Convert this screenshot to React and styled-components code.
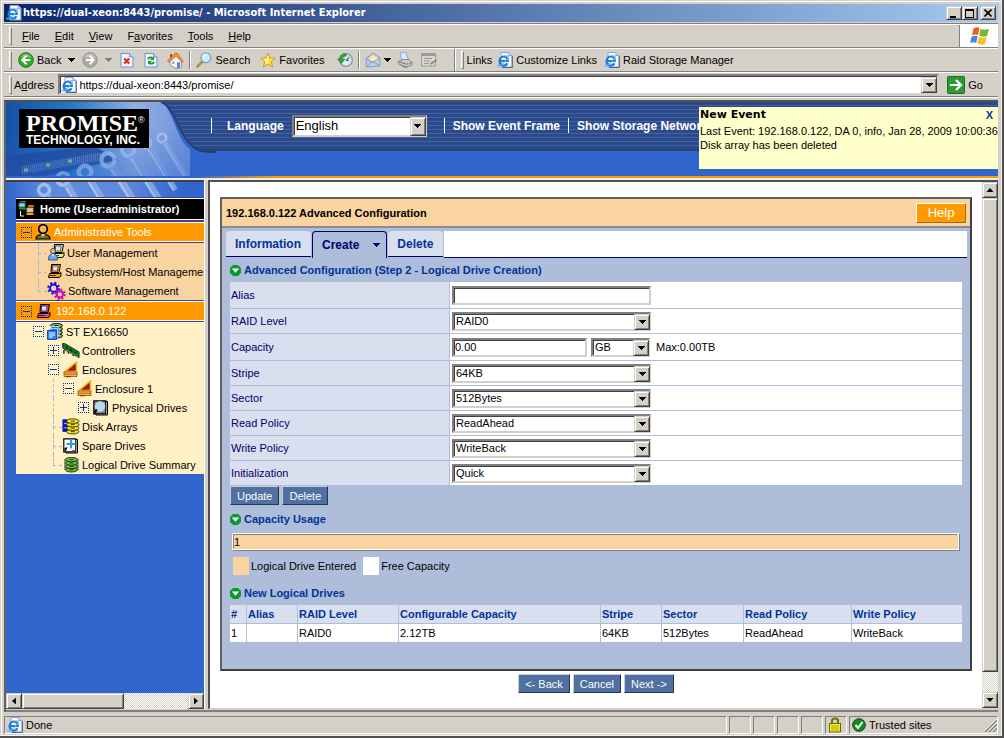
import React from "react";
import styled, { createGlobalStyle, css } from "styled-components";

const GlobalStyle = createGlobalStyle`
  * {
    box-sizing: border-box;
  }

  body {
    margin: 0;
    background: #d4d0c8;
    font-family: "Liberation Sans", Arial, sans-serif;
    font-size: 11px;
    line-height: 14px;
    color: #000;
  }

  button, input, select {
    font-family: inherit;
    font-size: inherit;
    margin: 0;
    border-radius: 0;
  }

  a {
    color: inherit;
    text-decoration: none;
  }
`;

const raised = css`
  border: 1px solid;
  border-color: #d4d0c8 #404040 #404040 #d4d0c8;
  box-shadow: inset 1px 1px 0 #fff, inset -1px -1px 0 #808080;
  background: #d4d0c8;
`;

const sunken = css`
  border: 2px solid;
  border-color: #808080 #d4d0c8 #d4d0c8 #808080;
  box-shadow: inset 1px 1px 0 #404040;
  background: #fff;
`;

/* ---------- browser window ---------- */

const Window = styled.div`
  display: flex;
  flex-direction: column;
  min-height: 100vh;
  padding: 4px 6px 4px 4px;
  background: #d4d0c8;
  box-shadow: inset -2px -2px 0 #505050, inset -3px -3px 0 #f4f2ee, inset 1px 1px 0 #d4d0c8, inset 2px 2px 0 #fff;
`;

const TitleBar = styled.header`
  display: flex;
  align-items: center;
  height: 18px;
  padding: 0 2px;
  background: linear-gradient(to right, #0a246a, #a6caf0);
  color: #fff;

  h1 {
    flex: 1;
    margin: 0 0 0 1px;
    font-size: 11px;
    font-family: "DejaVu Sans Condensed", "DejaVu Sans", sans-serif;
    font-weight: bold;
    white-space: nowrap;
  }
`;

const WindowButton = styled.button`
  ${raised}
  display: flex;
  align-items: center;
  justify-content: center;
  width: 16px;
  height: 14px;
  padding: 0;
  margin-left: ${(props) => (props.$gap ? "2px" : 0)};
`;

const Bars = styled.div`
  margin-top: 1px;
  border-top: 1px solid #808080;
  border-bottom: 1px solid #fff;
`;

const Bar = styled.div`
  display: flex;
  align-items: center;
  height: ${(props) => (props.$tall ? "25px" : "24px")};
  padding-left: 5px;
  border-top: 1px solid #fff;
  border-bottom: 1px solid #808080;
  overflow: hidden;
  white-space: nowrap;
`;

const Grip = styled.span`
  flex: none;
  width: 3px;
  height: 18px;
  border: 1px solid;
  border-color: #fff #808080 #808080 #fff;
`;

const Divider = styled.span`
  flex: none;
  width: 2px;
  height: ${(props) => (props.$full ? "24px" : "18px")};
  margin: 0 5px;
  background: linear-gradient(to right, #808080 50%, #fff 50%);
`;

const Menu = styled.nav`
  display: flex;
  flex: 1;
  gap: 15px;
  padding-left: 10px;
`;

const MenuItem = styled.a`
  color: #000;
`;

const FlagCell = styled.div`
  display: flex;
  align-items: center;
  justify-content: center;
  align-self: stretch;
  width: 39px;
  border-left: 1px solid #808080;
  background: #fff;
`;

const ToolButton = styled.button`
  display: flex;
  align-items: center;
  flex: none;
  gap: 3px;
  height: 20px;
  padding: 0;
  margin-left: ${(props) => props.$before || 0}px;
  border: 0;
  background: none;
  color: #000;
`;

const ToolLink = styled.a`
  display: flex;
  align-items: center;
  gap: 3px;
  margin-left: ${(props) => props.$before || 0}px;
`;

const AddressBox = styled.div`
  ${sunken}
  display: flex;
  align-items: center;
  flex: 1;
  height: 21px;
  margin-left: 4px;
  padding-left: 1px;
`;

const AddressInput = styled.input`
  flex: 1;
  min-width: 0;
  margin-left: 2px;
  padding: 0;
  border: 0;
  outline: 0;
`;

const ArrowButton = styled.button`
  ${raised}
  display: flex;
  align-items: center;
  justify-content: center;
  flex: none;
  width: 16px;
  height: 16px;
  padding: 0;
`;

const GoButton = styled(ToolButton)`
  margin: 0 15px 0 8px;
`;

/* ---------- page header ---------- */

const Page = styled.main`
  position: relative;
  display: flex;
  flex: 1;
  flex-direction: column;
  margin-top: 2px;
  border-left: 2px solid #606060;
  border-top: 2px solid #505050;
`;

const Banner = styled.div`
  position: relative;
  height: 76px;
  overflow: hidden;
  background: #3165ce;
  border-bottom: 2px solid #ff9a00;
  border-image: linear-gradient(to right, #3165ce 190px, #ff9a00 270px) 2;
`;

const Stripes = styled.div`
  display: flex;
  align-items: center;
  height: 49px;
  padding-left: 205px;
  border-bottom: 2px solid #2c4373;
  background: repeating-linear-gradient(#2a4a8c 0, #2a4a8c 3px, #44639f 3px, #44639f 4px);
  color: #fff;
  font-size: 12px;
  font-weight: bold;
  white-space: nowrap;
`;

const BannerPicture = styled.svg`
  position: absolute;
  left: 0;
  top: 0;
`;

const Logo = styled.div`
  position: absolute;
  left: 13px;
  top: 7px;
  width: 130px;
  height: 39px;
  padding: 2px 0 0 7px;
  background: #000;
  color: #fff;
  white-space: nowrap;

  strong {
    display: block;
    font: bold 24px/24px "Liberation Serif", serif;
  }

  sup {
    font: 9px/9px "Liberation Sans", sans-serif;
    vertical-align: 8px;
  }

  span {
    display: block;
    font: 900 12px/10px "Liberation Sans", sans-serif;
  }
`;

const HeaderItem = styled.div`
  display: flex;
  align-items: center;
  height: 15px;
  padding-left: ${(props) => (props.$wide ? "15px" : "8px")};
  margin-right: ${(props) => (props.$wide ? "17px" : "8px")};
  border-left: 1px solid #fff;

  label {
    margin-right: 8px;
  }
`;

const EventPopup = styled.aside`
  position: absolute;
  right: 0;
  top: 5px;
  width: 299px;
  height: 62px;
  padding: 1px 0 0 1px;
  background: #ffffcc;
  white-space: nowrap;
`;

const EventTitle = styled.div`
  display: flex;
  justify-content: space-between;
  margin-bottom: 2px;
  padding-right: 5px;
  font: bold 11px/14px "DejaVu Sans", sans-serif;

  button {
    padding: 0;
    border: 0;
    background: none;
    color: #003399;
    font: bold 11px/14px "Liberation Sans", sans-serif;
  }
`;

/* ---------- frames ---------- */

const Frames = styled.div`
  display: grid;
  flex: 1;
  grid-template-columns: 198px 4px minmax(0, 1fr);
  padding-bottom: 1px;
  border-top: 2px solid #f0eee8;
  border-bottom: 2px solid #808080;
`;

const Splitter = styled.div`
  border-left: 1px solid #fff;
  background: #d4d0c8;
`;

const Side = styled.div`
  position: relative;
  display: flex;
  flex-direction: column;
  overflow: hidden;
  border-top: 2px solid #404040;
  background: #3165ce;
`;

const SidePicture = styled.svg`
  position: absolute;
  left: 0;
  top: 0;
`;

const Tree = styled.div`
  position: relative;
  flex: 1;
  margin: 15px 0 0 10px;
`;

const TreeGroup = styled.div`
  background: ${(props) => props.$color};
`;

const TreeBar = styled.div`
  display: flex;
  align-items: center;
  height: ${(props) => (props.$home ? "24px" : "22px")};
  padding-left: ${(props) => (props.$home ? "2px" : "5px")};
  border-top: 1px solid #4a3c8c;
  border-bottom: 1px solid #4a3c8c;
  box-shadow: inset 0 1px 0 #fff, inset 0 -1px 0 #fff;
  background: ${(props) => (props.$home ? "#000" : "#ff9900")};
  color: #fff;
  font-weight: ${(props) => (props.$home ? "bold" : "normal")};
  white-space: nowrap;

  a {
    margin-left: ${(props) => (props.$home ? "5px" : "3px")};
  }
`;

const TreeRow = styled.div`
  position: relative;
  display: flex;
  align-items: center;
  height: 19px;
  padding-left: ${(props) => props.$indent}px;
  white-space: nowrap;

  &::before {
    content: "";
    display: ${(props) => (props.$line ? "block" : "none")};
    position: absolute;
    left: ${(props) => props.$line}px;
    top: 0;
    width: ${(props) => (props.$branch ? "8px" : 0)};
    height: ${(props) => (props.$branch ? "10px" : "19px")};
    border-left: 1px dashed #a9b7cf;
    border-bottom: ${(props) => (props.$branch ? "1px dashed #a9b7cf" : 0)};
  }

  &::after {
    content: "";
    display: ${(props) => (props.$more ? "block" : "none")};
    position: absolute;
    left: ${(props) => props.$line}px;
    top: 10px;
    height: 9px;
    border-left: 1px dashed #a9b7cf;
  }

  a {
    margin-left: 2px;
  }
`;

const Toggle = styled.button`
  position: relative;
  z-index: 1;
  flex: none;
  width: 11px;
  height: 11px;
  padding: 0;
  margin-right: 3px;
  border: 1px dotted #003399;
  background: transparent;

  &::before {
    content: "";
    position: absolute;
    left: 1px;
    top: 4px;
    width: 7px;
    height: 1px;
    background: #003399;
  }

  &::after {
    content: "";
    display: ${(props) => (props.$open ? "none" : "block")};
    position: absolute;
    left: 4px;
    top: 1px;
    width: 1px;
    height: 7px;
    background: #003399;
  }
`;

const IconSlot = styled.span`
  position: relative;
  display: flex;
  align-items: center;
  justify-content: center;
  flex: none;
  width: ${(props) => props.$width || 18}px;
`;

const ScrollTrack = styled.div`
  display: flex;
  flex-direction: ${(props) => (props.$vertical ? "column" : "row")};
  flex: none;
  ${(props) => (props.$vertical ? "width: 16px;" : "height: 16px;")}
  background: repeating-conic-gradient(#fff 0 25%, #d4d0c8 0 50%) 0 0 / 2px 2px;
`;

const ScrollRest = styled.div`
  flex: 1;
`;

const ScrollThumb = styled.div`
  ${raised}
  flex: ${(props) => props.$share};
`;

const Main = styled.div`
  display: flex;
  min-width: 0;
  border: 2px solid;
  border-width: 2px 0 1px 2px;
  border-color: #505050 #d4d0c8 #d4d0c8 #505050;
  background: #fff;
`;

const MainBody = styled.div`
  flex: 1;
  min-width: 0;
  padding: 15px 10px 8px;
`;

/* ---------- configuration panel ---------- */

const Panel = styled.section`
  border: 2px solid;
  border-color: #606060 #404040 #404040 #606060;
  background: #adbdda;
`;

const PanelTitle = styled.div`
  display: flex;
  align-items: center;
  justify-content: space-between;
  height: 29px;
  padding: 0 4px;
  border-bottom: 2px solid #8b8b93;
  background: #fad4a0;

  h2 {
    margin: 0;
    font-size: 11px;
  }
`;

const HelpButton = styled.button`
  width: 50px;
  height: 20px;
  padding: 0;
  border: 1px solid;
  border-color: #fff #a06a20 #a06a20 #fff;
  background: #ff9900;
  color: #fff;
  font-size: 13px;
`;

const Tabs = styled.div`
  display: flex;
  gap: 1px;
  height: 30px;
  padding: 3px 3px 0 4px;
`;

const Tab = styled.button`
  display: flex;
  align-items: center;
  gap: 14px;
  height: ${(props) => (props.$active ? "27px" : "26px")};
  padding: 0 ${(props) => (props.$active ? "6px" : "10px")} 0 9px;
  border: 0 solid #00006b;
  border-width: ${(props) => (props.$active ? "1px 1px 0 1px" : "0 0 1px 0")};
  border-radius: 4px 4px 0 0;
  background: ${(props) => (props.$active ? "#adbdda" : "#d9dfee")};
  color: ${(props) => (props.$active ? "#00006b" : "#003399")};
  font-size: 12px;
  font-weight: bold;
`;

const TabRest = styled.div`
  flex: 1;
  height: 27px;
  border-bottom: 1px solid #00006b;
  background: #fff;
`;

const PanelBody = styled.div`
  padding: 0 8px 27px;
`;

const Heading = styled.h3`
  display: flex;
  align-items: center;
  gap: 3px;
  height: 24px;
  margin: ${(props) => props.$above || 0}px 0 0;
  color: #003399;
  font-size: 11px;
`;

const FormGrid = styled.div`
  display: grid;
  gap: 1px;
`;

const FormRow = styled.div`
  display: grid;
  grid-template-columns: 219px minmax(0, 1fr);
  gap: 1px;
  height: ${(props) => (props.$tall ? "26px" : "24px")};

  > label {
    display: flex;
    align-items: center;
    padding-left: 1px;
    background: #d9dfee;
    color: #00006b;
  }
`;

const FormValue = styled.div`
  display: flex;
  align-items: center;
  padding-left: 2px;
  background: #fff;
`;

const TextField = styled.input`
  ${sunken}
  width: ${(props) => props.$width}px;
  height: 19px;
  padding: 0 1px;
`;

const SelectBox = styled.div`
  position: relative;
  width: ${(props) => props.$width}px;
  height: ${(props) => props.$height || 19}px;

  select {
    ${sunken}
    display: block;
    width: 100%;
    height: 100%;
    padding: 0 18px 0 2px;
    appearance: none;
    color: #000;
    font-size: ${(props) => props.$size || 11}px;
  }

  span {
    ${raised}
    position: absolute;
    right: 1px;
    top: 2px;
    bottom: 1px;
    display: flex;
    align-items: center;
    justify-content: center;
    width: 16px;
    pointer-events: none;
  }
`;

const Spacer = styled.span`
  width: ${(props) => props.$width}px;
`;

const Buttons = styled.div`
  display: flex;
  justify-content: ${(props) => (props.$center ? "center" : "flex-start")};
  gap: 3px;
  margin-top: ${(props) => (props.$center ? "3px" : "1px")};
  margin-bottom: 2px;
`;

const Button = styled.button`
  height: 19px;
  padding: 0 6px;
  border: 1px solid;
  border-color: #c5d0e2 #25364f #25364f #c5d0e2;
  background: #4f70a0;
  color: #fff;
`;

const CapacityBar = styled.div`
  margin: 2px 2px 0;
  height: 18px;
  border: 1px solid;
  border-color: #fff #808080 #808080 #fff;
  background: #fff;
  padding: 0 1px 1px 0;

  div {
    height: 100%;
    border: 1px solid;
    border-color: #808080 #fad4a0 #fad4a0 #808080;
    background: #fad4a0;
  }
`;

const Legend = styled.div`
  display: flex;
  align-items: center;
  margin: 6px 0 0 3px;

  span {
    margin: 0 7px 0 2px;
  }
`;

const Swatch = styled.i`
  width: 16px;
  height: 18px;
  background: ${(props) => props.$color};
`;

const DriveTable = styled.table`
  width: 100%;
  table-layout: fixed;
  border-collapse: separate;
  border-spacing: 0;

  th, td {
    height: 18px;
    padding: 0 1px;
    border-right: 1px solid #adbdda;
    line-height: 18px;
    text-align: left;
    white-space: nowrap;
    background: #fff;
  }

  th {
    height: 19px;
    border-bottom: 1px solid #adbdda;
    background: #d9dfee;
    color: #003399;
  }

  th:last-child, td:last-child {
    border-right: 0;
  }
`;

/* ---------- status bar ---------- */

const StatusBar = styled.footer`
  display: flex;
  gap: 2px;
  height: 18px;
  margin-top: 4px;
`;

const StatusCell = styled.div`
  display: flex;
  align-items: center;
  gap: 3px;
  width: ${(props) => props.$width}px;
  flex: ${(props) => (props.$grow ? "1" : "none")};
  padding-left: 2px;
  border: 1px solid;
  border-color: #808080 #fff #fff #808080;
`;

/* ---------- icons ---------- */

const Down = ({ color = "#000", size = 7 }) => (
  <svg width={size} height="4" viewBox="0 0 7 4" shapeRendering="crispEdges">
    <path d="M0 0h7v1H0zM1 1h5v1H1zM2 2h3v1H2zM3 3h1v1H3z" fill={color} />
  </svg>
);

const Triangle = ({ turn }) => (
  <svg width="8" height="8" viewBox="0 0 8 8">
    <path d="M0.5 6h7L4 2z" transform={`rotate(${turn} 4 4)`} />
  </svg>
);

const IePage = () => (
  <svg width="16" height="16" viewBox="0 0 16 16">
    <path d="M4 0.5h8l3 3v11.5H4z" fill="#f4f8ff" stroke="#8fa3d6" />
    <path d="M12 0.5v3h3" fill="#cfdcf6" stroke="#8fa3d6" />
    <path d="M15.3 4v11.500H5" fill="none" stroke="#4b5f9e" />
    <path d="M2.5 9h8.3c0-6-8.2-6-8.2 0.2 0 5.3 6 5.6 7.8 2" fill="none" stroke="#1f7cd6" strokeWidth="2.2" />
    <path d="M1 12.5C-0.5 16 5 13.5 9 8.5 12.5 4.5 12 2.5 8.5 4.5" fill="none" stroke="#62b7f0" strokeWidth="1.1" />
  </svg>
);

const Nav = ({ gray }) => (
  <svg width="16" height="16" viewBox="0 0 16 16">
    <circle cx="8" cy="8" r="7.3" fill={gray ? "#aaa9a4" : "#36a62c"} stroke={gray ? "#999" : "#1d7a1b"} />
    <path d="M2.5 6C4 0.8 12 0.8 13.5 6 10 4.5 6 4.5 2.5 6z" fill="#fff" opacity="0.35" />
    <path
      d="M8.5 3.8L4.3 8l4.2 4.2M4.8 8h7.4"
      transform={gray ? "rotate(180 8 8)" : undefined}
      fill="none"
      stroke="#fff"
      strokeWidth="2"
    />
  </svg>
);

const StopIcon = () => (
  <svg width="14" height="16" viewBox="0 0 14 16">
    <path d="M1 1.5h8.5L13 5v10H1z" fill="#eef3ff" stroke="#6e93d8" />
    <path d="M9.5 1.5V5H13" fill="#bcd0f5" stroke="#6e93d8" />
    <path d="M4.2 6.5l5 5M9.2 6.5l-5 5" stroke="#e02a14" strokeWidth="2.2" />
  </svg>
);

const RefreshIcon = () => (
  <svg width="14" height="16" viewBox="0 0 14 16">
    <path d="M1 1.5h8.5L13 5v10H1z" fill="#eef3ff" stroke="#6e93d8" />
    <path d="M9.5 1.5V5H13" fill="#bcd0f5" stroke="#6e93d8" />
    <path d="M4 7c1-2 3-2 4.3-0.8M10 10c-1 2-3.2 2.2-4.5 0.8" fill="none" stroke="#159a22" strokeWidth="1.8" />
    <path d="M10 4v4H6zM4 13V9h4z" fill="#159a22" />
  </svg>
);

const HomeIcon = () => (
  <svg width="17" height="17" viewBox="0 0 17 17">
    <path d="M3 8.5L9 3l5.5 6v6.5L9 16.5 3 13z" fill="#f5f5fa" stroke="#8795b8" />
    <path d="M0.5 9L7.5 1.5 10 1l6.5 8.5-1.5 1L9 4 2 10.5z" fill="#f0913a" stroke="#c06a1e" strokeWidth="0.7" />
    <path d="M3 2h2v2.5L3 6.5z" fill="#b44b32" />
    <path d="M10 10.5l3 -0.5v5.5l-3 0.7z" fill="#5f82cf" />
    <path d="M5 9.5h2.5v2.5H5z" fill="#87a9e8" />
  </svg>
);

const SearchIcon = () => (
  <svg width="16" height="16" viewBox="0 0 16 16">
    <path d="M6.5 9.5L1.5 14.5" stroke="#b98a4c" strokeWidth="2.6" strokeLinecap="round" />
    <circle cx="9.8" cy="5.8" r="4.9" fill="#c9ecff" stroke="#7d9fce" strokeWidth="1.3" />
    <path d="M7 5c0.5-2 2-2.5 3.5-2.4" fill="none" stroke="#fff" strokeWidth="1.5" />
  </svg>
);

const StarIcon = () => (
  <svg width="16" height="16" viewBox="0 0 16 16">
    <path d="M8 1l2 4.8 5.3 0.4-4 3.5 1.3 5.3L8 12.2 3.4 15l1.3-5.3-4-3.5L6 5.8z" fill="#ffe14d" stroke="#cf9a24" />
    <path d="M8 3.3v7.2l-2.5 1.4 0.6-2.6-2.3-2 3-0.4z" fill="#fff6b0" />
  </svg>
);

const HistoryIcon = () => (
  <svg width="16" height="16" viewBox="0 0 16 16">
    <circle cx="9" cy="8" r="6.3" fill="#dceaf4" stroke="#8198a8" strokeWidth="1.3" />
    <path d="M9 8.5l3.5-3.5M9 8.5h3" stroke="#566b86" strokeWidth="1.2" />
    <path d="M9.5 2.3C6 0.5 2.5 3.5 2.8 7H0.5L4.3 11.5 8 7H5.7c0-2 1-3 3.3-2.8z" fill="#37a637" stroke="#1e7c27" strokeWidth="0.6" />
  </svg>
);

const MailIcon = () => (
  <svg width="16" height="16" viewBox="0 0 16 16">
    <path d="M1 6.5L8 1l7 4.5v8.5L1.5 15z" fill="#b6d0f2" stroke="#7f9dcb" />
    <path d="M3.2 6.5L8 2.5l4.8 3V9L8 11z" fill="#ffe6b2" stroke="#ddb25d" strokeWidth="0.6" />
    <path d="M1.5 14.8L7 9.5l1.5 0.6 6.3 3.6M1 6.8l6.5 3.7L15 5.8" fill="none" stroke="#7f9dcb" />
  </svg>
);

const PrintIcon = () => (
  <svg width="16" height="16" viewBox="0 0 16 16">
    <path d="M3 1l6-0.5L11.5 8 5 9z" fill="#dcebff" stroke="#7b9bd0" strokeWidth="0.8" />
    <path d="M1.5 9.5L5 7.5h7l3 3v2.5L9.5 15 1.5 12z" fill="#c8c8c8" stroke="#8b8b8b" />
    <path d="M1.5 9.5l8 2.7 5.5-1.7M4 13l3 2.2 4-0.5" fill="none" stroke="#777" />
    <path d="M11 11.5l2-0.6" stroke="#e0c050" />
  </svg>
);

const EditIcon = () => (
  <svg width="16" height="14" viewBox="0 0 16 14">
    <path d="M0.5 0.5h14v12.5H0.5z" fill="#d8d6d0" stroke="#9b9a96" />
    <path d="M0.5 2h14" stroke="#9b9a96" strokeWidth="2" />
    <path d="M3 5.5h8M3 8h6M3 10.5h5" stroke="#9b9a96" />
    <path d="M9.5 11l6-4" stroke="#858480" strokeWidth="1.6" />
  </svg>
);

const FlagIcon = () => (
  <svg width="19" height="18" viewBox="0 0 19 18">
    <path d="M3.5 1.5Q6.5-0.5 9.5 1L8 8Q5 6.800 2 8.300z" fill="#ef5a22" />
    <path d="M10.700 1.800Q14.500 3.500 19 1.800L17 9Q13 10.500 9.200 8.600z" fill="#78b62c" />
    <path d="M1.700 9.500Q5 8 7.700 9.300L6.200 16Q3.200 14.500 0 16z" fill="#3f86e0" />
    <path d="M8.900 9.800Q12.500 11.500 16.600 10.300L15 17Q11 18.500 7.300 16.500z" fill="#f9c31d" />
  </svg>
);

const GoIcon = () => (
  <svg width="18" height="18" viewBox="0 0 18 18">
    <rect x="0.5" y="0.5" width="17" height="17" rx="1" fill="#2f9a35" stroke="#16701d" />
    <path d="M3 9h11M9 4l5 5-5 5" fill="none" stroke="#fff" strokeWidth="2.2" />
  </svg>
);

const GreenDown = () => (
  <svg width="11" height="11" viewBox="0 0 11 11">
    <path d="M3 0h5l3 3v5l-3 3H3L0 8V3z" fill="#0a9a30" />
    <path d="M1.800 3.500h7.400L5.500 7.800z" fill="#fff" />
  </svg>
);

// small desktop machine, used in several colours through the tree
const Computer = ({ color, x = 0, y = 0 }) => (
  <g transform={`translate(${x} ${y})`} stroke="#000">
    <path d="M3.500 0.500h9l-1.500 8h-8z" fill={color} />
    <path d="M4.500 2h5.500l-0.500 5h-5z" fill="#d7e6ff" strokeWidth="0.6" />
    <path d="M1.500 9.500h10l1.500-1v3.500l-2 1.500H0.500z" fill={color} />
    <path d="M2 11.500h6" strokeWidth="0.7" />
  </g>
);

const ComputerIcon = ({ color }) => (
  <svg width="14" height="15" viewBox="0 0 14 15">
    <Computer color={color} />
  </svg>
);

const NetworkIcon = () => (
  <svg width="17" height="18" viewBox="0 0 17 18">
    <path d="M2 1.500h6M1 3h6v4H1z" stroke="#2e8b57" fill="#9ac8f8" />
    <path d="M1 8.500h7" stroke="#2e8b57" strokeWidth="2" />
    <path d="M10 6h6" stroke="#f39a1e" strokeWidth="1.500" />
    <path d="M9 8h6v4H9z" stroke="#f39a1e" fill="#b8d2ff" />
    <path d="M8.500 14h7" stroke="#f39a1e" strokeWidth="2" />
    <path d="M2.500 11v5H6" fill="none" stroke="#fff" />
  </svg>
);

const AdminIcon = () => (
  <svg width="16" height="16" viewBox="0 0 16 16">
    <path d="M1 15c0-4 3-4.500 7-4.500s7 0.500 7 4.500z" fill="#66762c" stroke="#000" strokeWidth="1.200" />
    <path d="M6 8h4v3L8 13l-2-2z" fill="#f8c890" />
    <circle cx="8" cy="5" r="4.300" fill="#f9b360" stroke="#000" strokeWidth="1.700" />
  </svg>
);

const UserIcon = () => (
  <svg width="17" height="17" viewBox="0 0 17 17">
    <Computer color="#f2e68a" x={3} y={0} />
    <circle cx="5" cy="7" r="2.500" fill="#ffb45a" stroke="#24559a" />
    <path d="M0.500 16c0-5 2-6 4.500-6s4.500 1 4.500 6z" fill="#6fa6ee" stroke="#24559a" />
    <path d="M4 10h2l-1 3z" fill="#fff" />
  </svg>
);

const Gears = () => (
  <svg width="20" height="20" viewBox="0 0 20 20" fill="none">
    <circle cx="7" cy="7" r="3.800" stroke="#0a0af0" strokeWidth="2" />
    <circle cx="7" cy="7" r="5.700" stroke="#0a0af0" strokeWidth="2" strokeDasharray="2.240 2.240" />
    <circle cx="13.500" cy="13.500" r="3.300" stroke="#c800b8" strokeWidth="2" />
    <circle cx="13.500" cy="13.500" r="5.200" stroke="#c800b8" strokeWidth="2" strokeDasharray="2.040 2.040" />
  </svg>
);

const Disks = ({ color, edge = "#000", count = 4 }) => (
  <>
    {Array.from({ length: count }, (_, i) => (
      <g key={i} fill={color} stroke={edge} strokeWidth="0.9">
        <ellipse cx="9.500" cy={12.800 - i * 3.400} rx="6" ry="2.200" />
        <path d={`M7.500 ${12.800 - i * 3.400}h4`} />
      </g>
    ))}
  </>
);

const SubsystemIcon = () => (
  <svg width="17" height="17" viewBox="0 0 17 17">
    <Disks color="#7bc043" />
    <path d="M4 3.500h8v9H4zM2.500 5.500h8v9h-8z" fill="#2a7af0" stroke="#dcecff" strokeWidth="0.7" />
    <path d="M0.500 7.500h9v9h-9z" fill="#2b82f6" stroke="#0b4fc0" />
    <path d="M2 10h6M2 12h6M2 14h4" stroke="#fff" />
  </svg>
);

const ControllerIcon = () => (
  <svg width="19" height="17" viewBox="0 0 19 17">
    <path d="M0.500 1l3 0.500L18 10v6L4 8.500 1 6z" fill="#197a2c" stroke="#0a3d14" />
    <path d="M4 4l2 1v2L4 6zM8 6l3 2v2L8 8.500zM13 9l2 1v2l-2-1z" fill="#0b2410" />
    <path d="M2 8v4M6 10.500l1.500 1M11 13l2 1" stroke="#222" strokeWidth="1.500" />
    <path d="M4 8.300l13 6.700" stroke="#c4b64a" strokeDasharray="1 1" />
  </svg>
);

const EnclosureIcon = () => (
  <svg width="16" height="17" viewBox="0 0 16 17">
    <path d="M13.500 1v9.500H2z" fill="#a51414" stroke="#f2bc12" strokeWidth="1.600" />
    <path d="M1 11h13v4.500H1z" fill="#f6b85c" stroke="#9c5200" strokeWidth="0.8" />
    <path d="M1 13.200h13" stroke="#9c5200" strokeWidth="0.8" />
    <path d="M3 15.700h5" stroke="#6c3500" />
  </svg>
);

const DriveIcon = ({ spare }) => (
  <svg width="16" height="16" viewBox="0 0 16 16">
    <path d="M3 1.500h11.500V15H3z" fill="#fff" stroke="#000" />
    <path d="M0.800 0.800h12v13h-12z" fill={spare ? "#fff" : "#8b8b95"} stroke="#000" strokeWidth="1.200" />
    {spare ? (
      <path d="M8 1.500v9M3.500 6h9" stroke="#2f9be8" strokeWidth="2.200" />
    ) : (
      <circle cx="7" cy="6.500" r="4.800" fill="#b5dcea" stroke="#cfd5df" />
    )}
    <path d="M1.500 14v-4l3-1-1 3z" fill="#000" />
    <path d="M9 12.500h3" stroke="#777" />
  </svg>
);

const ArrayIcon = () => (
  <svg width="20" height="19" viewBox="0 0 20 19">
    <path d="M1 2h5v3H2v2h4v3H2v2h4v3H1z" fill="#0a14c8" stroke="#0a14c8" />
    <g transform="translate(1 0.500) scale(1.150 1.150)">
      <Disks color="#ffe818" edge="#33320a" />
    </g>
  </svg>
);

const LogicalIcon = () => (
  <svg width="17" height="16" viewBox="0 0 17 16">
    <g transform="translate(-1 0)">
      <Disks color="#6fc24a" edge="#102a08" />
      <path d="M3 2v11M16 2v11" stroke="#1e4716" />
    </g>
  </svg>
);

const LockIcon = () => (
  <svg width="14" height="16" viewBox="0 0 14 16">
    <path d="M4 7V3.500Q4 1.500 7 1.500T10 3.500V7" fill="none" stroke="#777100" strokeWidth="2" />
    <rect x="1.500" y="6.500" width="11" height="8.500" fill="#f4ef35" stroke="#6d6900" />
    <path d="M3 9h8M3 11h8M3 13h8" stroke="#a9a400" />
  </svg>
);

const TrustedIcon = () => (
  <svg width="14" height="14" viewBox="0 0 14 14">
    <circle cx="7" cy="7" r="6.300" fill="#118a1e" stroke="#074b0d" />
    <path d="M3.500 7l2.500 3 4.500-6" fill="none" stroke="#fff" strokeWidth="2" />
  </svg>
);

const SizeGrip = () => (
  <svg width="13" height="13" viewBox="0 0 13 13">
    <path d="M1 13L13 1M5 13l8-8M9 13l4-4" stroke="#808080" strokeWidth="1.500" />
    <path d="M0 12.500L12.500 0M4 12.500L12.500 4M8 12.500L12.500 8" stroke="#fff" strokeWidth="0.8" />
  </svg>
);

const Wrench = ({ x, y, size = 1 }) => (
  <g transform={`translate(${x} ${y}) rotate(-32) scale(${size})`} fill="none">
    <circle r="6" stroke="#b9cdf2" strokeWidth="4" />
    <path d="M0 7v62" stroke="#93b1e6" strokeWidth="7" />
    <path d="M-2 9v60" stroke="#cfddf7" strokeWidth="1.500" />
  </g>
);

const Wrenches = () => (
  <g opacity="0.75">
    <Wrench x={38} y={88} size={0.9} />
    <Wrench x={57} y={77} />
    <Wrench x={79} y={70} size={1.050} />
    <Wrench x={102} y={58} size={1.100} />
    <Wrench x={122} y={48} />
    <Wrench x={140} y={41} size={0.8} />
    <Wrench x={156} y={36} size={0.700} />
  </g>
);

const HeaderArt = () => (
  <BannerPicture width="210" height="76" viewBox="0 0 210 76">
    <defs>
      <linearGradient id="sky" x1="0" y1="0" x2="1" y2="0">
        <stop offset="0" stopColor="#164fa6" />
        <stop offset="0.35" stopColor="#1d7bc8" />
        <stop offset="0.7" stopColor="#94aee2" />
        <stop offset="1" stopColor="#6f93da" />
      </linearGradient>
      <linearGradient id="fade" x1="0" y1="0" x2="0" y2="1">
        <stop offset="0.3" stopColor="#3165ce" stopOpacity="0" />
        <stop offset="1" stopColor="#3165ce" stopOpacity="0.4" />
      </linearGradient>
      <clipPath id="cut">
        <path d="M0 0H155C168 8 170 38 184 47V76H0z" />
      </clipPath>
    </defs>
    <path d="M0 0H155C170 4 172 38 192 48Q198 50 210 50V76H0z" fill="#3165ce" />
    <g clipPath="url(#cut)">
      <rect width="184" height="76" fill="url(#sky)" />
      <path d="M0 54L88 44 112 58 30 76H0z" fill="#1d428c" opacity="0.75" />
      <path d="M16 66L98 52M16 70L92 57" stroke="#7998d4" strokeWidth="4" strokeDasharray="1 1" opacity="0.7" />
      <path d="M18 68h4M40 63h4M62 59h4" stroke="#8bd060" strokeWidth="3" />
      <Wrenches />
      <rect width="184" height="76" fill="url(#fade)" />
    </g>
    <path d="M155 0C170 4 172 38 192 48Q198 50 210 50" fill="none" stroke="#263f78" strokeWidth="2" />
  </BannerPicture>
);

const SideArt = () => (
  <SidePicture width="198" height="26" viewBox="0 80 198 26">
    <defs>
      <linearGradient id="sideFade" x1="0" y1="0" x2="1" y2="0">
        <stop offset="0" stopColor="#3165ce" />
        <stop offset="0.2" stopColor="#5f8bdb" />
        <stop offset="0.6" stopColor="#5f8bdb" />
        <stop offset="0.9" stopColor="#3165ce" />
      </linearGradient>
    </defs>
    <rect y="80" width="198" height="26" fill="url(#sideFade)" />
    <Wrenches />
  </SidePicture>
);

/* ---------- pieces ---------- */

const ADMIN_ITEMS = [
  { name: "User Management", icon: <UserIcon />, width: 18 },
  { name: "Subsystem/Host Management", icon: <ComputerIcon color="#ff9a1e" />, width: 16 },
  { name: "Software Management", icon: <Gears />, width: 19 },
];

const DEVICE_ITEMS = [
  { name: "ST EX16650", indent: 17, open: true, icon: <SubsystemIcon />, width: 17 },
  { name: "Controllers", indent: 32, open: false, icon: <ControllerIcon /> },
  { name: "Enclosures", indent: 32, open: true, icon: <EnclosureIcon /> },
  { name: "Enclosure 1", indent: 47, open: true, icon: <EnclosureIcon />, width: 16, line: 37 },
  { name: "Physical Drives", indent: 62, open: false, icon: <DriveIcon />, line: 37 },
  { name: "Disk Arrays", indent: 46, icon: <ArrayIcon />, line: 37, branch: true, more: true },
  { name: "Spare Drives", indent: 46, icon: <DriveIcon spare />, line: 37, branch: true, more: true },
  { name: "Logical Drive Summary", indent: 46, icon: <LogicalIcon />, line: 37, branch: true },
];

const FIELDS = [
  { id: "stripe", name: "Stripe", value: "64KB" },
  { id: "sector", name: "Sector", value: "512Bytes" },
  { id: "read", name: "Read Policy", value: "ReadAhead" },
  { id: "write", name: "Write Policy", value: "WriteBack" },
  { id: "init", name: "Initialization", value: "Quick" },
];

const COLUMNS = [
  { name: "#", width: 17, value: "1" },
  { name: "Alias", width: 51, value: "" },
  { name: "RAID Level", width: 101, value: "RAID0" },
  { name: "Configurable Capacity", width: 202, value: "2.12TB" },
  { name: "Stripe", width: 61, value: "64KB" },
  { name: "Sector", width: 82, value: "512Bytes" },
  { name: "Read Policy", width: 108, value: "ReadAhead" },
  { name: "Write Policy", value: "WriteBack" },
];

const Select = ({ id, value, width, height, size, label }) => (
  <SelectBox $width={width} $height={height} $size={size}>
    <select id={id} aria-label={label} defaultValue={value}>
      <option>{value}</option>
    </select>
    <span>
      <Down />
    </span>
  </SelectBox>
);

const BrowserBars = () => (
  <Bars>
    <Bar>
      <Grip />
      <Menu>
        <MenuItem href="#file"><u>F</u>ile</MenuItem>
        <MenuItem href="#edit"><u>E</u>dit</MenuItem>
        <MenuItem href="#view"><u>V</u>iew</MenuItem>
        <MenuItem href="#favorites">F<u>a</u>vorites</MenuItem>
        <MenuItem href="#tools"><u>T</u>ools</MenuItem>
        <MenuItem href="#help"><u>H</u>elp</MenuItem>
      </Menu>
      <FlagCell>
        <FlagIcon />
      </FlagCell>
    </Bar>
    <Bar>
      <Grip />
      <ToolButton $before={6}><Nav />Back</ToolButton>
      <ToolButton $before={7} aria-label="Back history"><Down /></ToolButton>
      <ToolButton $before={7} aria-label="Forward"><Nav gray /></ToolButton>
      <ToolButton $before={7} aria-label="Forward history"><Down color="#808080" /></ToolButton>
      <ToolButton $before={8} aria-label="Stop"><StopIcon /></ToolButton>
      <ToolButton $before={10} aria-label="Refresh"><RefreshIcon /></ToolButton>
      <ToolButton $before={9} aria-label="Home"><HomeIcon /></ToolButton>
      <Divider />
      <ToolButton><SearchIcon />Search</ToolButton>
      <ToolButton $before={10}><StarIcon />Favorites</ToolButton>
      <ToolButton $before={12} aria-label="History"><HistoryIcon /></ToolButton>
      <Divider />
      <ToolButton aria-label="Mail"><MailIcon /><Down /></ToolButton>
      <ToolButton $before={6} aria-label="Print"><PrintIcon /></ToolButton>
      <ToolButton $before={8} aria-label="Edit"><EditIcon /></ToolButton>
      <Spacer $width={12} />
      <Divider $full />
      <Grip />
      <ToolLink as="span" $before={3}>Links</ToolLink>
      <ToolLink href="#customize" $before={5}><IePage />Customize Links</ToolLink>
      <ToolLink href="#raid" $before={7}><IePage />Raid Storage Manager</ToolLink>
    </Bar>
    <Bar $tall>
      <Grip />
      <Spacer $width={2} />
      <label htmlFor="address">A<u>d</u>dress</label>
      <AddressBox>
        <IePage />
        <AddressInput id="address" defaultValue="https://dual-xeon:8443/promise/" />
        <ArrowButton aria-label="Show addresses"><Down /></ArrowButton>
      </AddressBox>
      <GoButton><GoIcon />Go</GoButton>
    </Bar>
  </Bars>
);

const SideTree = () => (
  <Side>
    <SideArt />
    <Tree>
      <TreeBar $home>
        <NetworkIcon />
        <a href="#home">Home (User:administrator)</a>
      </TreeBar>
      <TreeGroup $color="#fad4a0">
        <TreeBar>
          <Toggle $open aria-label="Collapse Administrative Tools" />
          <AdminIcon />
          <a href="#admin">Administrative Tools</a>
        </TreeBar>
        {ADMIN_ITEMS.map((item, i) => (
          <TreeRow key={item.name} $indent={31} $line={22} $branch $more={i < 2}>
            <IconSlot $width={item.width}>{item.icon}</IconSlot>
            <a href="#admin-item">{item.name}</a>
          </TreeRow>
        ))}
      </TreeGroup>
      <TreeGroup $color="#fff0c6">
        <TreeBar>
          <Toggle $open aria-label="Collapse 192.168.0.122" />
          <IconSlot>
            <ComputerIcon color="#e0508c" />
          </IconSlot>
          <a href="#host">192.168.0.122</a>
        </TreeBar>
        {DEVICE_ITEMS.map((item) => (
          <TreeRow
            key={item.name}
            $indent={item.indent}
            $line={item.line}
            $branch={item.branch}
            $more={item.more}
          >
            {item.open !== undefined && (
              <Toggle $open={item.open} aria-label={`Toggle ${item.name}`} />
            )}
            <IconSlot $width={item.width}>{item.icon}</IconSlot>
            <a href="#device-item">{item.name}</a>
          </TreeRow>
        ))}
      </TreeGroup>
    </Tree>
    <ScrollTrack>
      <ArrowButton aria-label="Scroll left"><Triangle turn={-90} /></ArrowButton>
      <ScrollThumb $share={61} />
      <ScrollRest style={{ flexGrow: 39 }} />
      <ArrowButton aria-label="Scroll right"><Triangle turn={90} /></ArrowButton>
    </ScrollTrack>
  </Side>
);

const Configuration = () => (
  <Panel>
    <PanelTitle>
      <h2>192.168.0.122 Advanced Configuration</h2>
      <HelpButton>Help</HelpButton>
    </PanelTitle>
    <Tabs>
      <Tab>Information</Tab>
      <Tab $active>Create <Down color="#00006b" /></Tab>
      <Tab>Delete</Tab>
      <TabRest />
    </Tabs>
    <PanelBody>
      <Heading><GreenDown />Advanced Configuration (Step 2 - Logical Drive Creation)</Heading>
      <FormGrid>
        <FormRow $tall>
          <label htmlFor="alias">Alias</label>
          <FormValue><TextField id="alias" $width={199} /></FormValue>
        </FormRow>
        <FormRow>
          <label htmlFor="level">RAID Level</label>
          <FormValue><Select id="level" value="RAID0" width={199} /></FormValue>
        </FormRow>
        <FormRow $tall>
          <label htmlFor="capacity">Capacity</label>
          <FormValue>
            <TextField id="capacity" defaultValue="0.00" $width={135} />
            <Spacer $width={4} />
            <Select label="Capacity unit" value="GB" width={59} />
            <Spacer $width={6} />
            Max:0.00TB
          </FormValue>
        </FormRow>
        {FIELDS.map((field) => (
          <FormRow key={field.id}>
            <label htmlFor={field.id}>{field.name}</label>
            <FormValue><Select id={field.id} value={field.value} width={199} /></FormValue>
          </FormRow>
        ))}
      </FormGrid>
      <Buttons>
        <Button>Update</Button>
        <Button>Delete</Button>
      </Buttons>
      <Heading><GreenDown />Capacity Usage</Heading>
      <CapacityBar><div>1</div></CapacityBar>
      <Legend>
        <Swatch $color="#fad4a0" />
        <span>Logical Drive Entered</span>
        <Swatch $color="#fff" />
        <span>Free Capacity</span>
      </Legend>
      <Heading $above={6}><GreenDown />New Logical Drives</Heading>
      <DriveTable>
        <colgroup>
          {COLUMNS.map((col) => <col key={col.name} width={col.width} />)}
        </colgroup>
        <thead>
          <tr>{COLUMNS.map((col) => <th key={col.name}>{col.name}</th>)}</tr>
        </thead>
        <tbody>
          <tr>{COLUMNS.map((col) => <td key={col.name}>{col.value}</td>)}</tr>
        </tbody>
      </DriveTable>
    </PanelBody>
  </Panel>
);

const App = () => (
  <>
    <GlobalStyle />
    <Window>
      <TitleBar>
        <IePage />
        <h1>https://dual-xeon:8443/promise/ - Microsoft Internet Explorer</h1>
        <WindowButton aria-label="Minimize">
          <svg width="10" height="9"><path d="M1 7h6v2H1z" /></svg>
        </WindowButton>
        <WindowButton aria-label="Maximize">
          <svg width="10" height="9"><path d="M0 0h9v9H0zM1 2v6h7V2z" fillRule="evenodd" /></svg>
        </WindowButton>
        <WindowButton aria-label="Close" $gap>
          <svg width="8" height="8"><path d="M0.5 0.5l7 7M7.5 0.5l-7 7" stroke="#000" strokeWidth="1.600" /></svg>
        </WindowButton>
      </TitleBar>
      <BrowserBars />
      <Page>
        <Banner>
          <Stripes>
            <HeaderItem $wide>
              <label htmlFor="language">Language</label>
              <Select id="language" value="English" width={135} height={22} size={13} />
            </HeaderItem>
            <HeaderItem><a href="#events">Show Event Frame</a></HeaderItem>
            <HeaderItem><a href="#network">Show Storage Network</a></HeaderItem>
          </Stripes>
          <HeaderArt />
          <Logo>
            <strong>PROMISE<sup>®</sup></strong>
            <span>TECHNOLOGY, INC.</span>
          </Logo>
        </Banner>
        <EventPopup>
          <EventTitle>
            New Event
            <button aria-label="Close event">X</button>
          </EventTitle>
          <div>Last Event: 192.168.0.122, DA 0, info, Jan 28, 2009 10:00:36</div>
          <div>Disk array has been deleted</div>
        </EventPopup>
        <Frames>
          <SideTree />
          <Splitter />
          <Main>
            <MainBody>
              <Configuration />
              <Buttons $center>
                <Button>&lt;- Back</Button>
                <Button>Cancel</Button>
                <Button>Next -&gt;</Button>
              </Buttons>
            </MainBody>
            <ScrollTrack $vertical>
              <ArrowButton aria-label="Scroll up"><Triangle turn={0} /></ArrowButton>
              <ScrollThumb $share={96} />
              <ScrollRest style={{ flexGrow: 4 }} />
              <ArrowButton aria-label="Scroll down"><Triangle turn={180} /></ArrowButton>
            </ScrollTrack>
          </Main>
        </Frames>
      </Page>
      <StatusBar>
        <StatusCell $grow><IePage />Done</StatusCell>
        <StatusCell $width={22} />
        <StatusCell $width={22} />
        <StatusCell $width={22} />
        <StatusCell $width={22} />
        <StatusCell $width={22}><LockIcon /></StatusCell>
        <StatusCell $width={149}>
          <TrustedIcon />
          Trusted sites
          <Spacer style={{ flexGrow: 1 }} />
          <SizeGrip />
        </StatusCell>
      </StatusBar>
    </Window>
  </>
);

export default App;
